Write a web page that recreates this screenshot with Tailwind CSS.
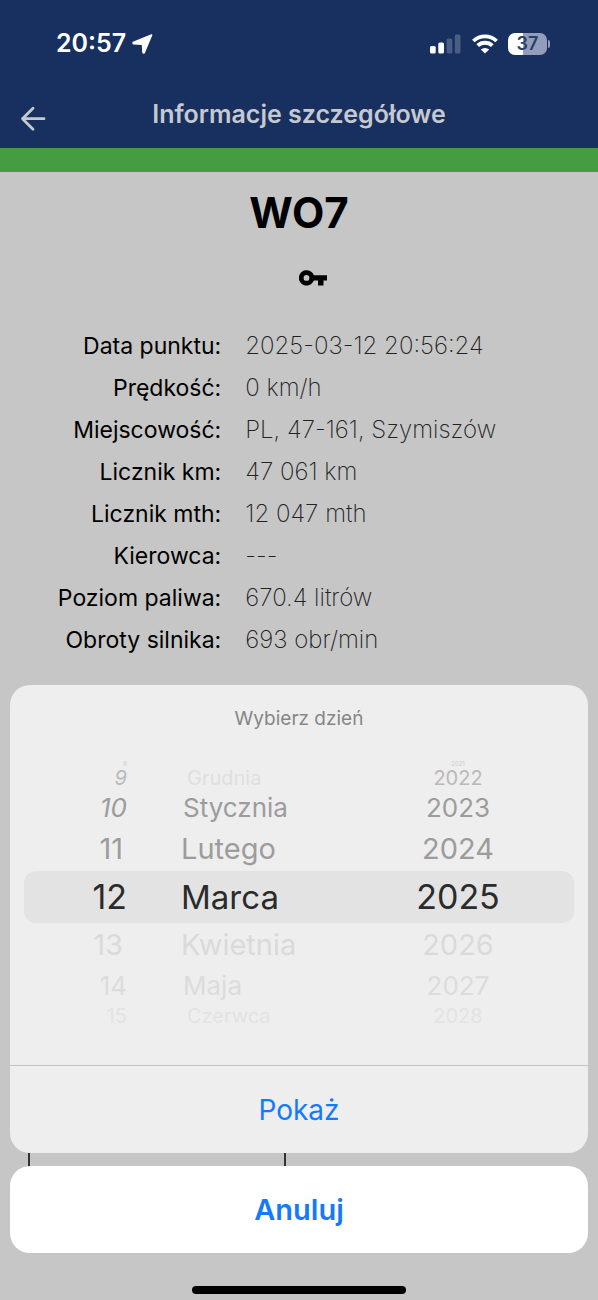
<!DOCTYPE html>
<html lang="pl">
<head>
<meta charset="utf-8">
<meta name="viewport" content="width=device-width, initial-scale=1">
<title>Informacje szczegółowe</title>
<script src="https://cdn.jsdelivr.net/npm/@tailwindcss/browser@4"></script>
</head>
<body class="relative flex min-h-screen flex-col overflow-hidden bg-[#c6c6c6] font-['Inter','Liberation_Sans',sans-serif] text-black">

<header class="border-b-[24px] border-[#469d41] bg-[#183060]">
  <!-- Status bar -->
  <div class="flex h-22 items-center justify-between pr-12 pl-14 text-white">
    <div class="flex items-center gap-1.5 text-[25px] font-semibold">
      <span>20:57</span>
      <svg class="h-5 w-[21px]" viewBox="0 0 21 20" fill="currentColor" stroke="currentColor" stroke-width="1.600" stroke-linejoin="round" aria-hidden="true"><path d="M19.600 1 1.200 8.600Q.8 9.400 1.800 9.600L9.800 10.200Q10.500 10.300 10.600 11L11 18.400Q11.500 19.600 12.300 18.500z"/></svg>
    </div>
    <div class="flex items-center gap-2.5">
      <svg class="h-5 w-8" viewBox="0 0 32 20" fill="currentColor" aria-hidden="true">
        <rect x="0" y="12" width="5.700" height="7.500" rx="1.600"/>
        <rect x="8.300" y="8.500" width="5.700" height="11" rx="1.600"/>
        <rect x="16.600" y="4.500" width="5.700" height="15" rx="1.600" opacity=".22"/>
        <rect x="24.800" y="0.5" width="5.700" height="19" rx="1.600" opacity=".22"/>
      </svg>
      <svg class="h-5 w-[26px]" viewBox="0 0 26 20" aria-hidden="true">
        <g fill="none" stroke="currentColor" stroke-width="3.800"><path d="M1.400 7a16.700 16.700 0 0 1 23.200 0"/><path d="M5.700 11.700a10.500 10.500 0 0 1 14.600 0"/></g>
        <path fill="currentColor" d="M13 19.600 8.800 15.600a6 6 0 0 1 8.400 0z"/>
      </svg>
      <div class="flex items-center gap-px">
        <div class="flex h-[22px] w-[39px] items-center justify-center rounded-[7px] bg-linear-to-r from-white from-38% to-[#929dba] to-38% text-lg font-semibold text-[#2b3f6b]">37</div>
        <div class="h-2 w-0.5 rounded-r-full bg-[#929dba]"></div>
      </div>
    </div>
  </div>
  <!-- Navigation bar -->
  <div class="grid h-15 grid-cols-[64px_1fr_64px] items-start text-[#c6c9cf]">
    <button type="button" aria-label="Wstecz" class="mt-4.5 ml-5 h-[26px] w-[26px]">
      <svg class="h-full w-full" viewBox="0 0 26 26" fill="none" stroke="currentColor" stroke-width="2.800" stroke-linecap="round" stroke-linejoin="round" aria-hidden="true"><path d="M24 12.700H2.500M13 2.300 2.500 12.700 13 23.300"/></svg>
    </button>
    <h1 class="mt-2.5 text-center text-[25px] leading-8 font-semibold">Informacje szczegółowe</h1>
  </div>
</header>

<main class="flex flex-1 flex-col">
  <h2 class="mt-4 text-center text-[42px] leading-[50px] font-bold">WO7</h2>
  <svg class="mt-8 ml-[50%] block h-4 w-[28px]" viewBox="0 0 28 16" aria-label="Stacyjka" role="img"><path fill-rule="evenodd" d="M14.800 5.200A7.700 7.700 0 1 0 14.800 10.500H19V15.500H24.500V10.500H28V5.200zM7.500 5a2.900 2.900 0 1 1 0 5.800 2.900 2.900 0 0 1 0-5.800z"/></svg>

  <dl class="mt-[39px] grid grid-cols-[37%_1fr] gap-x-6 text-[23px] leading-[42px]">
    <dt class="text-right">Data punktu:</dt><dd class="text-2xl leading-[42px] font-extralight text-[#222]">2025-03-12 20:56:24</dd>
    <dt class="text-right">Prędkość:</dt><dd class="text-2xl leading-[42px] font-extralight text-[#222]">0 km/h</dd>
    <dt class="text-right">Miejscowość:</dt><dd class="text-2xl leading-[42px] font-extralight text-[#222]">PL, 47-161, Szymiszów</dd>
    <dt class="text-right">Licznik km:</dt><dd class="text-2xl leading-[42px] font-extralight text-[#222]">47 061 km</dd>
    <dt class="text-right">Licznik mth:</dt><dd class="text-2xl leading-[42px] font-extralight text-[#222]">12 047 mth</dd>
    <dt class="text-right">Kierowca:</dt><dd class="text-2xl leading-[42px] font-extralight text-[#222]">---</dd>
    <dt class="text-right">Poziom paliwa:</dt><dd class="text-2xl leading-[42px] font-extralight text-[#222]">670.4 litrów</dd>
    <dt class="text-right">Obroty silnika:</dt><dd class="text-2xl leading-[42px] font-extralight text-[#222]">693 obr/min</dd>
  </dl>
  <!-- Chart grid behind the sheet -->
  <div class="mt-12 ml-7 flex flex-1 border-l-2 border-[#333]"><div class="w-[45%] border-r-2 border-[#333]"></div></div>
</main>

<!-- Action sheet -->
<div class="absolute inset-x-0 bottom-0">
  <div class="px-2.5">
    <section role="dialog" aria-labelledby="sheet-title" class="overflow-hidden rounded-[20px] bg-[#eeeeee]">
      <h3 id="sheet-title" class="pt-5 text-center text-[19px] leading-7 text-[#868686]">Wybierz dzień</h3>
      <div class="relative mx-3.5 mt-7 mb-[38px]">
        <div class="absolute inset-x-0 top-[110px] h-[52px] rounded-xl bg-[#e3e3e3]"></div>
        <div class="relative grid grid-cols-[103px_1fr_160px]">
          <ul role="listbox" aria-label="Dzień" class="text-right text-[#9c9c9c]">
            <li role="option" class="h-1.5 text-[6px] leading-1.5 text-[#cccccc]">8</li>
            <li role="option" class="h-[22px] text-xl leading-[22px] text-[#b9b9b9] italic">9</li>
            <li role="option" class="h-[38px] text-[26px] leading-[38px] italic">10</li>
            <li role="option" class="h-11 pr-1 text-[29px] leading-11">11</li>
            <li role="option" aria-selected="true" class="h-[52px] text-[34px] leading-[52px] text-[#2b2b2b]">12</li>
            <li role="option" class="h-11 pr-1 text-[29px] leading-11 text-[#dadada]">13</li>
            <li role="option" class="h-[38px] text-[26px] leading-[38px] text-[#dcdcdc]">14</li>
            <li role="option" class="h-[22px] text-xl leading-[22px] text-[#e3e3e3]">15</li>
          </ul>
          <ul role="listbox" aria-label="Miesiąc" class="pl-[54px] text-[#9c9c9c]">
            <li role="presentation" class="h-1.5"></li>
            <li role="option" class="h-[22px] pl-1.5 text-xl leading-[22px] text-[#dfdfdf]">Grudnia</li>
            <li role="option" class="h-[38px] pl-0.5 text-[26px] leading-[38px]">Stycznia</li>
            <li role="option" class="h-11 text-[29px] leading-11">Lutego</li>
            <li role="option" aria-selected="true" class="h-[52px] text-[33px] leading-[52px] text-[#2b2b2b]">Marca</li>
            <li role="option" class="h-11 text-[29px] leading-11 text-[#dadada]">Kwietnia</li>
            <li role="option" class="h-[38px] pl-0.5 text-[26px] leading-[38px] text-[#dcdcdc]">Maja</li>
            <li role="option" class="h-[22px] pl-1.5 text-xl leading-[22px] text-[#e3e3e3]">Czerwca</li>
          </ul>
          <ul role="listbox" aria-label="Rok" class="w-[88px] text-center text-[#9c9c9c]">
            <li role="option" class="h-1.5 text-[6px] leading-1.5 text-[#cccccc]">2021</li>
            <li role="option" class="h-[22px] text-xl leading-[22px] text-[#b9b9b9]">2022</li>
            <li role="option" class="h-[38px] text-[26px] leading-[38px]">2023</li>
            <li role="option" class="h-11 text-[29px] leading-11">2024</li>
            <li role="option" aria-selected="true" class="h-[52px] text-[34px] leading-[52px] text-[#2b2b2b]">2025</li>
            <li role="option" class="h-11 text-[29px] leading-11 text-[#dadada]">2026</li>
            <li role="option" class="h-[38px] text-[26px] leading-[38px] text-[#dcdcdc]">2027</li>
            <li role="option" class="h-[22px] text-xl leading-[22px] text-[#e3e3e3]">2028</li>
          </ul>
        </div>
      </div>
      <button type="button" class="block h-[88px] w-full border-t border-[#c3c3c3] text-[28px] text-[#147afa]">Pokaż</button>
    </section>
  </div>
  <div class="h-[13px]"></div>
  <div class="bg-linear-to-b from-transparent from-50% to-[#c6c6c6] to-50% px-2.5 pb-[33px]">
    <button type="button" class="block h-[87px] w-full rounded-[20px] bg-white text-[29px] font-semibold text-[#147afa]">Anuluj</button>
  </div>
  <div class="flex h-3.5 items-start justify-center bg-[#c6c6c6]"><div class="h-2 w-[214px] rounded-full bg-black"></div></div>
</div>
</body>
</html>
